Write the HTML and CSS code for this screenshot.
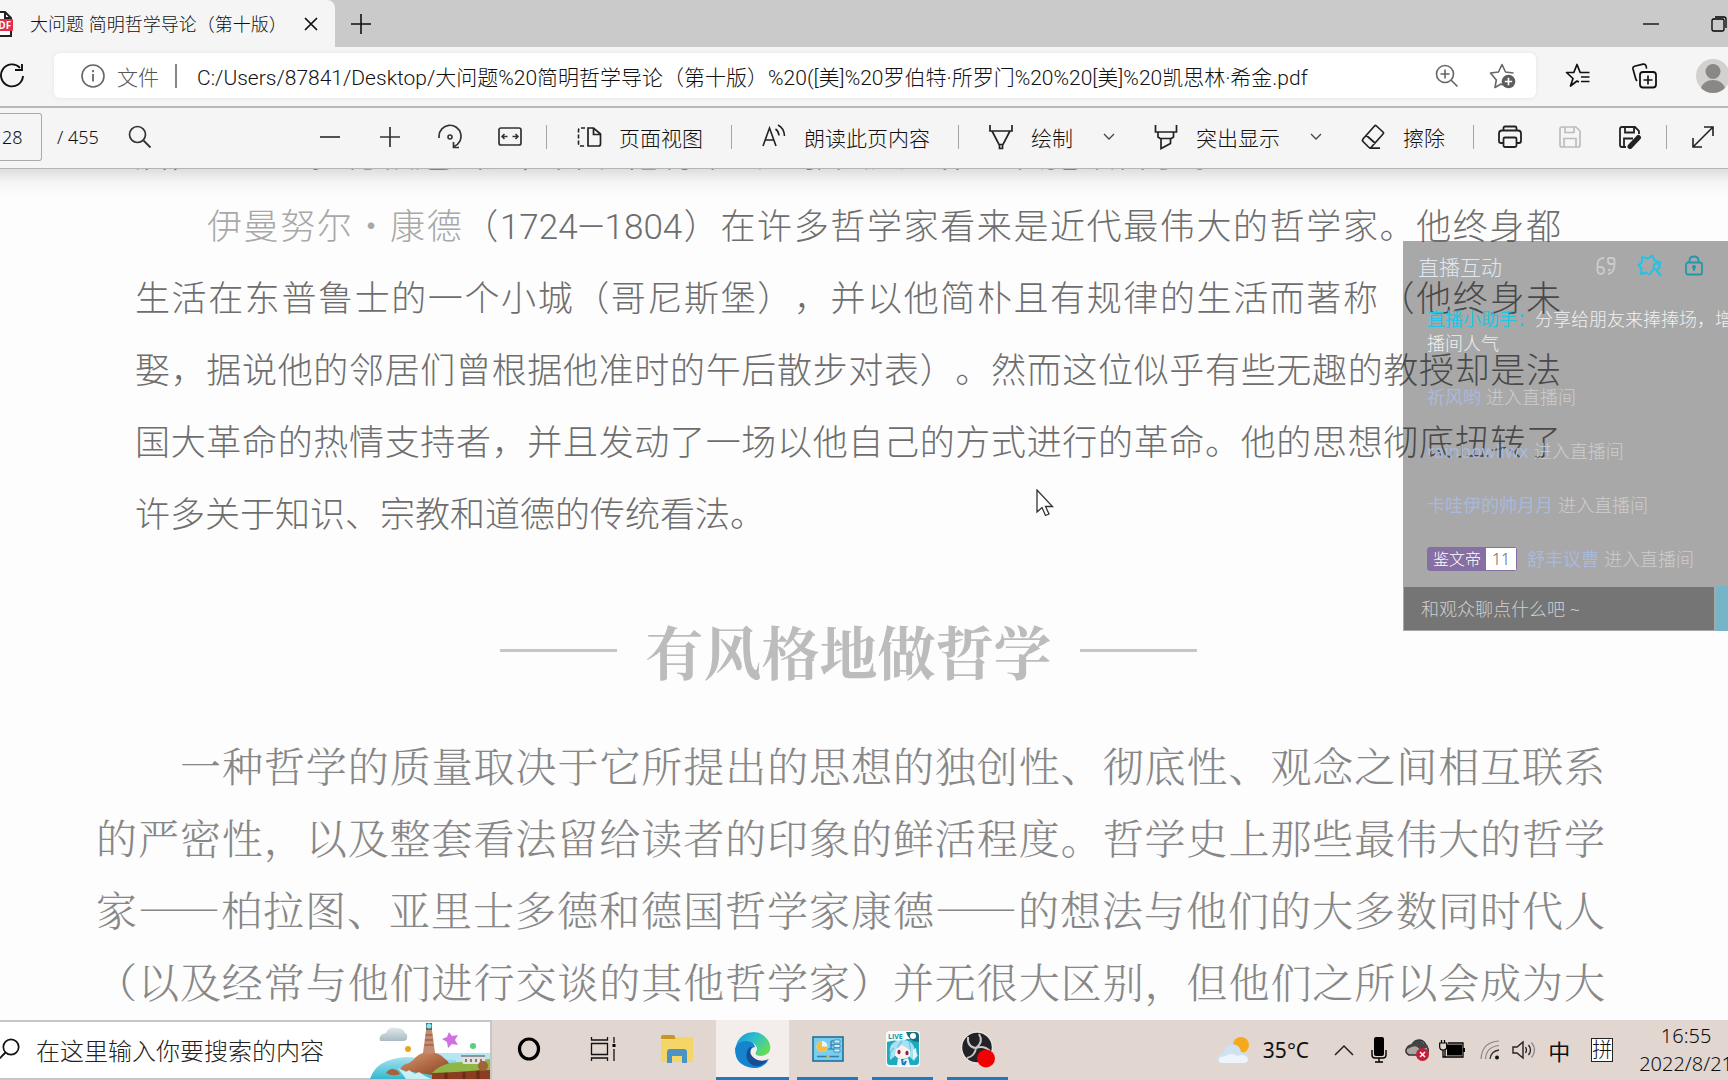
FILE: index.html
```html
<!DOCTYPE html>
<html lang="zh-CN">
<head>
<meta charset="utf-8">
<title>大问题 简明哲学导论（第十版）</title>
<link rel="stylesheet" href="styles.css">
</head>
<body>
<header class="tabstrip">
  <div class="tab">
    <svg class="tab-icon" width="24" height="26" viewBox="0 0 24 26"><path d="M3 1h13l6 6v18H3z" fill="#fff" stroke="#222" stroke-width="2"/><path d="M16 1v6h6" fill="none" stroke="#222" stroke-width="2"/><rect x="0" y="8" width="24" height="12" rx="1" fill="#e0304a"/><text x="3" y="18" font-size="10" font-weight="700" fill="#fff" class="svg-label">PDF</text></svg>
    <span class="tab-title">大问题 简明哲学导论（第十版）</span>
    <button class="tab-close" aria-label="关闭标签页"><svg width="14" height="14" viewBox="0 0 14 14"><path d="M1 1l12 12M13 1L1 13" stroke="#111" stroke-width="1.7"/></svg></button>
  </div>
  <button class="tab-new" aria-label="新建标签页"><svg width="22" height="22" viewBox="0 0 22 22"><path d="M11 1v20M1 11h20" stroke="#111" stroke-width="1.6"/></svg></button>
  <div class="window-buttons">
    <button aria-label="最小化"><svg width="16" height="16" viewBox="0 0 16 16"><path d="M0 8h16" stroke="#000" stroke-width="1.3"/></svg></button>
    <button aria-label="还原"><svg width="16" height="16" viewBox="0 0 16 16"><rect x="1" y="3" width="12" height="12" rx="1.5" fill="none" stroke="#000" stroke-width="1.3"/><path d="M4 1h9q2 0 2 2v9" fill="none" stroke="#000" stroke-width="1.3"/></svg></button>
  </div>
</header>

<nav class="navbar">
  <button class="reload" aria-label="刷新"><svg width="26" height="28" viewBox="0 0 26 28"><path d="M23 14a11 11 0 1 1-3-8.200M22 2v6h-7" fill="none" stroke="#111" stroke-width="1.9"/></svg></button>
  <div class="omnibox">
    <svg width="24" height="24" viewBox="0 0 24 24"><circle cx="12" cy="12" r="11" fill="none" stroke="#666" stroke-width="1.6"/><path d="M12 10v7.500M12 6v2.200" stroke="#666" stroke-width="1.8"/></svg>
    <label class="scheme" for="url">文件</label>
    <span class="scheme-rule"></span>
    <input id="url" class="url" type="text" value="C:/Users/87841/Desktop/大问题%20简明哲学导论（第十版）%20([美]%20罗伯特·所罗门%20%20[美]%20凯思林·希金.pdf">
    <button aria-label="缩放"><svg width="24" height="24" viewBox="0 0 24 24"><circle cx="10" cy="10" r="8.500" fill="none" stroke="#666" stroke-width="1.6"/><path d="M16 16l6.500 6.500M10 5.500v9M5.500 10h9" stroke="#666" stroke-width="1.6"/></svg></button>
    <button aria-label="收藏"><svg width="28" height="26" viewBox="0 0 28 26"><path d="M14 22l-2-1-6 3.500 1.300-7.500L1.500 10l8-1L13 1.500 16.500 9l8 1" fill="none" stroke="#666" stroke-width="1.600" stroke-linejoin="round"/><circle cx="19.500" cy="18.500" r="6.800" fill="#5c5c5c"/><path d="M19.500 14.800v7.400M15.800 18.500h7.400" stroke="#fff" stroke-width="1.600"/></svg></button>
  </div>
  <button class="nav-button" aria-label="收藏夹"><svg width="26" height="26" viewBox="0 0 26 26"><path d="M14 19l-2-1-6.500 5L8 15.500 1.500 9.500h7.300L12 1.500l3.200 8h9.300M16 14h8.500M16 18.500h8.500" fill="none" stroke="#111" stroke-width="1.700" stroke-linejoin="round"/></svg></button>
  <button class="nav-button" aria-label="集锦"><svg width="26" height="26" viewBox="0 0 26 26"><rect x="9" y="9" width="16" height="15.500" rx="3" fill="none" stroke="#111" stroke-width="1.800"/><path d="M17 12.500v9M12.500 17h9M6 18q-1-1-1.500-3L2 6q-.5-2 1.500-2.800L12 1.200q2-.5 3 1.500l.6 3" fill="none" stroke="#111" stroke-width="1.700"/></svg></button>
  <button class="avatar" aria-label="用户"><svg width="34" height="34" viewBox="0 0 34 34"><circle cx="17" cy="17" r="17" fill="#d3d1cf"/><circle cx="17" cy="12.500" r="7.500" fill="#8a8886"/><path d="M5 29q3-8 12-8t12 8q-5 5-12 5T5 29z" fill="#8a8886"/></svg></button>
</nav>

<div class="pdfbar">
  <input class="page-input" type="text" value="28" aria-label="页码">
  <span class="page-total">/ 455</span>
  <button class="find" aria-label="查找"><svg width="24" height="24" viewBox="0 0 24 24"><circle cx="9.500" cy="9.500" r="8" fill="none" stroke="#333" stroke-width="1.700"/><path d="M15.500 15.500l7 7" stroke="#333" stroke-width="1.800"/></svg></button>
  <div class="tools">
    <button class="tool-icon" aria-label="缩小"><svg width="22" height="24" viewBox="0 0 22 24"><path d="M1 12h20" stroke="#333" stroke-width="1.700"/></svg></button>
    <button class="tool-icon" aria-label="放大"><svg width="22" height="24" viewBox="0 0 22 24"><path d="M1 12h20M11 2v20" stroke="#333" stroke-width="1.700"/></svg></button>
    <button class="tool-icon" aria-label="旋转"><svg width="26" height="26" viewBox="0 0 26 26"><path d="M2 14V12a11 11 0 1 1 15 10.500M16.500 18v5.500h5.500" fill="none" stroke="#333" stroke-width="1.700"/><circle cx="13" cy="13" r="2" fill="none" stroke="#333" stroke-width="1.600"/></svg></button>
    <button class="tool-icon" aria-label="适应宽度"><svg width="24" height="20" viewBox="0 0 24 20"><rect x="1" y="1" width="22" height="17" rx="2" fill="none" stroke="#333" stroke-width="1.700"/><path d="M4 9.500h5.500M14.500 9.500H20M6.500 7L4 9.500 6.500 12M17.500 7L20 9.500 17.500 12" fill="none" stroke="#333" stroke-width="1.500"/></svg></button>
    <span class="rule"></span>
    <button class="tool-text"><svg width="26" height="22" viewBox="0 0 26 22"><path d="M12 2v18h10.500q2 0 2-2V8l-7-6zM17.500 2v6.500h7" fill="none" stroke="#222" stroke-width="1.700"/><path d="M9 2H5q-2.500 0-2.500 2.500v13Q2.500 20 5 20h4" fill="none" stroke="#222" stroke-width="1.600" stroke-dasharray="4 2"/></svg>页面视图</button>
    <span class="rule"></span>
    <button class="tool-text"><svg width="26" height="26" viewBox="0 0 26 26"><path d="M2 22L8.500 4 15 22M4.500 16h8M14.500 5q3 2 3.500 6.500M17 1q6 3 6.500 11" fill="none" stroke="#222" stroke-width="1.600"/></svg>朗读此页内容</button>
    <span class="rule"></span>
    <button class="tool-text"><svg width="26" height="26" viewBox="0 0 26 26"><path d="M2 1v6h22V1M4 7l7 13.500h4L22 7M11.500 20.500v4h3v-4" fill="none" stroke="#222" stroke-width="1.700"/></svg>绘制</button>
    <button class="chevron" aria-label="绘制选项"><svg width="12" height="8" viewBox="0 0 12 8"><path d="M1 1l5 5 5-5" fill="none" stroke="#444" stroke-width="1.300"/></svg></button>
    <button class="tool-text"><svg width="26" height="26" viewBox="0 0 26 26"><path d="M2.500 1v7h21V1M5 8v5l3 2v9.500l9.500-5V15l3-2V8M8 14.500h10" fill="none" stroke="#222" stroke-width="1.700"/></svg>突出显示</button>
    <button class="chevron" aria-label="突出显示选项"><svg width="12" height="8" viewBox="0 0 12 8"><path d="M1 1l5 5 5-5" fill="none" stroke="#444" stroke-width="1.300"/></svg></button>
    <button class="tool-text"><svg width="26" height="26" viewBox="0 0 26 26"><path d="M14.500 2q1-1 2 0l6.500 6q1 1 0 2L11.500 23q-1.500 1.500-3 0L3 17.500q-1-1 0-2.500zM6.500 11.500l9 8M9 24.200h11" fill="none" stroke="#222" stroke-width="1.700"/></svg>擦除</button>
    <span class="rule"></span>
    <button class="tool-icon" aria-label="打印"><svg width="24" height="24" viewBox="0 0 24 24"><path d="M5.500 5V3q0-1.500 1.500-1.500h10q1.500 0 1.500 1.500v2M5.500 18H3q-2 0-2-2V8.500q0-3 3-3h16q3 0 3 3V16q0 2-2 2h-2.500" fill="none" stroke="#222" stroke-width="1.800"/><rect x="5.500" y="12.500" width="13" height="9.500" rx="1.500" fill="none" stroke="#222" stroke-width="1.800"/></svg></button>
    <button class="tool-icon" aria-label="保存"><svg width="24" height="24" viewBox="0 0 24 24"><path d="M4 2h14l4 4v14q0 2-2 2H4q-2 0-2-2V4q0-2 2-2zM7 2v5.500h9V2M6 22v-8.500h12V22" fill="none" stroke="#bdbdbd" stroke-width="1.700"/></svg></button>
    <button class="tool-icon" aria-label="另存为"><svg width="24" height="24" viewBox="0 0 24 24"><path d="M8 22H4q-2 0-2-2V4q0-2 2-2h13l4 4v3M7 2v5.500h9V2M6 22v-8.500h9" fill="none" stroke="#222" stroke-width="1.800"/><path d="M12 21.500l8.500-9" stroke="#222" stroke-width="5" stroke-linecap="round"/></svg></button>
    <span class="rule"></span>
    <button class="tool-icon" aria-label="全屏"><svg width="22" height="24" viewBox="0 0 22 24"><path d="M1 22L21 2M12 2h9v9M1 13v9h9" fill="none" stroke="#222" stroke-width="1.600"/></svg></button>
  </div>
</div>

<main class="viewer">
  <article class="excerpt">
    <p><span class="short">后，亚里士多德被迫出逃，并说他将不会让雅典人“第二次犯毁哲学家”。</span></p>
    <p>
      <span class="line indent"><em>伊曼努尔·康德</em>（<span class="years">1724—1804</span>）在许多哲学家看来是近代最伟大的哲学家。他终身都</span>
      <span class="line">生活在东普鲁士的一个小城（哥尼斯堡），并以他简朴且有规律的生活而著称（他终身未</span>
      <span class="line">娶，据说他的邻居们曾根据他准时的午后散步对表）。然而这位似乎有些无趣的教授却是法</span>
      <span class="line">国大革命的热情支持者，并且发动了一场以他自己的方式进行的革命。他的思想彻底扭转了</span>
      <span class="short">许多关于知识、宗教和道德的传统看法。</span>
    </p>
  </article>
  <h2 class="chapter">有风格地做哲学</h2>
  <article class="body-text">
    <p>
      <span class="line indent">一种哲学的质量取决于它所提出的思想的独创性、彻底性、观念之间相互联系</span>
      <span class="line">的严密性，以及整套看法留给读者的印象的鲜活程度。哲学史上那些最伟大的哲学</span>
      <span class="line">家——柏拉图、亚里士多德和德国哲学家康德——的想法与他们的大多数同时代人</span>
      <span class="line">（以及经常与他们进行交谈的其他哲学家）并无很大区别，但他们之所以会成为大</span>
    </p>
  </article>
</main>

<footer class="taskbar">
  <div class="search">
    <svg class="search-icon" width="24" height="24" viewBox="0 0 24 24"><circle cx="15" cy="9" r="7.700" fill="none" stroke="#111" stroke-width="1.700"/><path d="M9.500 14.500L2 22" stroke="#111" stroke-width="1.900"/></svg>
    <input type="text" aria-label="搜索" placeholder="在这里输入你要搜索的内容">
    <svg class="island" width="120" height="57" viewBox="0 0 120 57">
      <defs><linearGradient id="sea" x1="0" y1="0" x2="0" y2="1"><stop offset="0" stop-color="#a5e2f0"/><stop offset="1" stop-color="#35b9cf"/></linearGradient><linearGradient id="rock" x1="0" y1="0" x2="1" y2="1"><stop offset="0" stop-color="#d99a70"/><stop offset="1" stop-color="#8a3f1e"/></linearGradient><linearGradient id="cloud" x1="0" y1="0" x2="0" y2="1"><stop offset="0" stop-color="#dfe8ec"/><stop offset="1" stop-color="#a9bac2"/></linearGradient></defs>
      <path d="M10 19q-2-7 6-8 3-7 11-5 6 0 8 5 3 1 2 5 0 3-4 3z" fill="url(#cloud)"/>
      <path d="M64 31h56v26H64z" fill="#b5e6f4"/>
      <path d="M0 57q6-20 36-22l50 3v19z" fill="url(#sea)"/>
      <path d="M30 48q2-5 6-6 5-1 10-7 4-4 11-5 12 0 17 6 7 5 8 14l-20 3z" fill="url(#rock)"/>
      <path d="M53 31L56 8h6l3 23q-6 2-12 0z" fill="#c48a72"/><path d="M55.500 13h7M55 18h8M54.500 23h9" stroke="#8d4c3b" stroke-width="1"/><path d="M56 1h6v7h-6z" fill="#456f78"/><circle cx="59" cy="4" r="2.500" fill="#8de5ee"/>
      <path d="M62 52q10-8 30-8h28v13H62z" fill="#8a3d20"/><path d="M76 50v7M94 48v9M108 48v9" stroke="#6b2b15" stroke-width="3"/><path d="M62 51q10-11 30-11l28-3v11q-10 0-20 1t-38 2z" fill="#8fb746"/>
      <path d="M91 34h24v8H93z" fill="#e4dfdd"/><path d="M91 34h24" stroke="#8f9499" stroke-width="2"/><path d="M96 37v3M101 37v3M106 37v3M111 37v3" stroke="#555" stroke-width="1.400"/>
      <path d="M16 51q5-7 12-2l2 3q-7 3-14-1z" fill="#a8603c"/><circle cx="113" cy="44" r="5" fill="#a06238"/><path d="M28 46l8 4 3-2 6 4 4-2 6 4 7 3H36z" fill="#eafbfd" opacity=".8"/>
      <circle cx="38" cy="27" r="3" fill="#e5a81c"/><circle cx="103" cy="24" r="3" fill="#59cf7d"/><path d="M79 10l3 4 6-1-3 5 3 5-6-1-4 4-1-6-5-3 5-2z" fill="#cf72e0"/>
    </svg>
  </div>
  <button class="task" aria-label="Cortana"><svg width="24" height="26" viewBox="0 0 24 26"><ellipse cx="12" cy="13" rx="9.500" ry="10" fill="none" stroke="#000" stroke-width="3.200"/></svg></button>
  <button class="task" aria-label="任务视图"><svg width="26" height="26" viewBox="0 0 26 26"><path d="M1.500 1v3h16V1M1.500 25v-3h16v3M1.500 7.500h16v11h-16zM24 1v6M24 13v12" fill="none" stroke="#111" stroke-width="1.300"/><rect x="22.500" y="8" width="3" height="3" fill="#000"/></svg></button>
  <button class="task" aria-label="文件资源管理器"><svg width="34" height="28" viewBox="0 0 34 28"><path d="M1 2q0-2 2-2h11l2 4H1z" fill="#c9971f"/><path d="M1 5l14-1 2-2h15q1 0 1 1v23q0 1-1 1H2q-1 0-1-1z" fill="#f5d566"/><path d="M7 28V17q0-3 3-3h14q3 0 3 3v11h-5v-7H12v7z" fill="#4a94c4"/></svg></button>
  <button class="task running current" aria-label="Microsoft Edge"><svg width="38" height="38" viewBox="0 0 38 38"><defs><linearGradient id="eg" x1="0" y1="0" x2="1" y2=".6"><stop offset="0" stop-color="#1b8fd6"/><stop offset=".5" stop-color="#2bc0cf"/><stop offset="1" stop-color="#63dc58"/></linearGradient></defs><path d="M2 16A17.500 17.500 0 0 1 36 15q2 10-9 11-7 0-5-4 2-3 0-6-5-8-20 0z" fill="url(#eg)"/><path d="M1 19q2-8 11-8 8 0 9 6-6 1-5 8 2 10 18 6-6 8-15 7Q1 36 1 19z" fill="#1683cf"/><path d="M16 17q-5 5-3 12 3 8 12 7 6-2 10-7-9 4-15-1-6-5-2-11z" fill="#174f96"/></svg></button>
  <button class="task running" aria-label="控制面板"><svg width="32" height="26" viewBox="0 0 32 26"><rect x="1" y="1" width="30" height="24" fill="#79cdf0" stroke="#23709b" stroke-width="1.600"/><circle cx="10" cy="10.500" r="5.500" fill="#e8f7fd"/><path d="M10 10.500V5a5.500 5.500 0 1 0 5.500 5.500z" fill="#f1bd43"/><path d="M16 13h3V5h3M19 9h3M19 13h3" fill="none" stroke="#22769f" stroke-width="1"/><path d="M22 4h6v3h-6zM22 8.500h6v3h-6zM22 13h6v3h-6z" fill="#d4f1fc" stroke="#2d80ab" stroke-width=".8"/><path d="M5 20.500h22" stroke="#2d80ab" stroke-width="1.500"/><circle cx="16" cy="20.500" r="1.500" fill="#efb33b"/></svg></button>
  <button class="task running" aria-label="直播"><svg width="36" height="38" viewBox="0 0 36 38"><rect x="1" y="1" width="34" height="36" rx="4" fill="#f6fbfc"/><path d="M2 12q8-3 14 0l6-3h12v23q0 3-3 3H5q-3 0-3-3z" fill="#1fa9bf"/><path d="M21 2h9q4 0 4 4v6q-10 0-13-10z" fill="#176f80"/><circle cx="28" cy="6" r="3" fill="#fff"/><text x="3" y="9" font-size="7" font-weight="700" fill="#1793ab" class="svg-label">LIVE</text><path d="M5 23q-2-11 11-13 13-1 14 12l3 3-4 6-5-5H10l-5 4z" fill="#a6e2f1"/><path d="M9 18q-4 2-4 9M17 11q-3 3-5 8M24 12q2 6 1 9" fill="none" stroke="#6cc3da" stroke-width="1.200"/><path d="M11 19l6-4 8 5v6q-3 3-8 3t-7-4z" fill="#fff1ee"/><ellipse cx="14" cy="22" rx="1.600" ry="2.200" fill="#8b2146"/><ellipse cx="22" cy="23" rx="1.600" ry="2.200" fill="#8b2146"/><path d="M13 28l5 2 5-2 2 7H12z" fill="#e8f6fb"/><path d="M17 29l1 6M21 31l-2 4" stroke="#2575b2" stroke-width="2"/><path d="M28 20l3-2 1 8-4 3z" fill="#e8f6fb"/></svg></button>
  <button class="task running" aria-label="OBS"><svg width="36" height="38" viewBox="0 0 36 38"><circle cx="17" cy="17.500" r="15.500" fill="#232226" stroke="#e8e4e2" stroke-width="1.500"/><path d="M16 18Q7 17 8 7M16 18q8-3 14 3M16 18q-1 8-9 10M16 18q8-6 3-14" fill="none" stroke="#c9c6c6" stroke-width="2"/><circle cx="26" cy="28.500" r="9" fill="#f00000"/></svg></button>
  <div class="tray">
    <svg width="34" height="28" viewBox="0 0 34 28"><circle cx="25" cy="9" r="8" fill="#f6a91c"/><path d="M3 26q-4-6 4-9 2-9 10-9 7 1 8 8 8 1 7 7 0 4-4 4z" fill="#cfe2f2"/><path d="M3 26q-2-5 6-6 7-4 12 0 8-3 11 3 0 4-4 4H5z" fill="#eef5fa"/></svg>
    <span class="temp">35°C</span>
    <svg class="up" width="20" height="12" viewBox="0 0 20 12"><path d="M1 11l9-9 9 9" fill="none" stroke="#222" stroke-width="1.500"/></svg>
    <svg class="mic" width="16" height="26" viewBox="0 0 16 26"><rect x="3" y="0" width="10" height="19" rx="2" fill="#000"/><path d="M1 13v5q0 3 3 3h8q3 0 3-3v-5M8 21v4M4 25h8" fill="none" stroke="#000" stroke-width="1.400"/></svg>
    <svg class="drive" width="26" height="24" viewBox="0 0 26 24"><path d="M5 17q-5-3-2-7 2-3 5-3 2-5 8-5 5 1 6 6 4 3 1 9z" fill="#a9a6a4" stroke="#333" stroke-width="1.500"/><path d="M4 11q8-6 12 1l8-3q0-3-4-3-3-5-9-3-5 3-7 8z" fill="#444"/><circle cx="18.500" cy="16.500" r="6.500" fill="#c41f3a"/><path d="M16 14l5 5M21 14l-5 5" stroke="#fff" stroke-width="1.500"/></svg>
    <svg class="battery" width="26" height="20" viewBox="0 0 26 20"><rect x="8" y="4.500" width="15" height="11" fill="#000"/><path d="M9 3h15v14H6V9M25.300 8v4M4 9v8h3M2.500 0v3M5.500 0v3" stroke="#000" stroke-width="1.300" fill="none"/><path d="M.7 3h7v4q0 3-3.500 3T.7 7z" fill="#e0d5cf" stroke="#000" stroke-width="1.200"/></svg>
    <svg class="wifi" width="20" height="20" viewBox="0 0 20 20"><circle cx="17" cy="17.500" r="2" fill="#111"/><path d="M10 19q1-8 9-9" fill="none" stroke="#333" stroke-width="1.300"/><path d="M1 19Q2 2 19 1M5.500 19Q6 7 19 5.500" fill="none" stroke="#8d8784" stroke-width="1.200"/></svg>
    <svg class="speaker" width="24" height="20" viewBox="0 0 24 20"><path d="M1 7v6h4l6 5V2L5 7z" fill="none" stroke="#222" stroke-width="1.400"/><path d="M13.500 7q2 3 0 6M16.500 5q4 5 0 10" fill="none" stroke="#222" stroke-width="1.300"/><path d="M19.500 2.500q6 7.500 0 15" fill="none" stroke="#8d8784" stroke-width="1.300"/></svg>
    <span class="ime">中</span>
    <span class="pinyin">拼</span>
    <div class="clock"><span>16:55</span><span>2022/8/21</span></div>
  </div>
</footer>

<aside class="live">
  <div class="live-inner">
    <div class="live-head">
      <h3>直播互动</h3>
      <button aria-label="连麦"><svg width="20" height="20" viewBox="0 0 20 20"><path d="M8 2Q2 2 1.500 8v6q0 4 3.500 4 3 0 3-3.500T4.500 11H1.500M12 2h4q2.500 0 2.500 2.500V9q-.5 8-6.500 9M18.500 8h-4Q12 8 12 5V2M12 14h2.500" fill="none" stroke="#cbcbcb" stroke-width="1.800"/></svg></button>
      <button aria-label="特效"><svg width="26" height="24" viewBox="0 0 26 24"><path d="M13 21l-4-2.500L4 20l.5-5.500L1.500 11 5 8.500 5 3l6 1.500L15.500 1.500l2 5 6 2-1 3" fill="none" stroke="#20c4e6" stroke-width="2" stroke-linejoin="round"/><circle cx="19.500" cy="12.500" r="3" fill="none" stroke="#20c4e6" stroke-width="2"/><path d="M18 15q-4 1-4 5M19 16l5 6" fill="none" stroke="#20c4e6" stroke-width="2.200"/></svg></button>
      <button aria-label="锁定"><svg width="20" height="22" viewBox="0 0 20 22"><rect x="2" y="7.500" width="16" height="12" rx="2" fill="none" stroke="#2397aa" stroke-width="1.800"/><path d="M5.500 7V5Q6 1.500 10 1.500T14.500 5v2M10 11v5" fill="none" stroke="#2397aa" stroke-width="1.800"/><circle cx="10" cy="12" r="2" fill="#2397aa"/></svg></button>
    </div>
    <ul class="messages">
      <li class="notice"><b>直播小助手：</b>分享给朋友来捧捧场，增加直播间人气</li>
      <li><i>祈风哟</i> 进入直播间</li>
      <li><i>rainbowliwx</i> 进入直播间</li>
      <li><i>卡哇伊的帅月月</i> 进入直播间</li>
      <li><span class="badge"><span class="badge-name">鉴文帝</span><span class="badge-level">11</span></span><i>舒丰议曹</i> 进入直播间</li>
    </ul>
    <div class="composer">
      <input type="text" aria-label="聊天" placeholder="和观众聊点什么吧 ~">
      <button aria-label="发送"></button>
    </div>
  </div>
</aside>
<svg class="pointer" width="18" height="28" viewBox="0 0 18 28"><path d="M1 1v22l5-4.500 3.500 8 3.500-1.500-3.500-7.500h7z" fill="#fff" stroke="#333" stroke-width="1.300"/></svg>
</body>
</html>
```
FILE: styles.css
```css
* { box-sizing: border-box; }

body {
  margin: 0;
  height: 100vh;
  overflow: hidden;
  position: relative;
  display: flex;
  flex-direction: column;
  background: #fdfdfd;
  color: #111;
  font-family: "Noto Sans", "Noto Sans CJK SC", sans-serif;
  font-weight: 300;
}

button {
  display: flex;
  align-items: center;
  justify-content: center;
  padding: 0;
  border: 0;
  background: none;
  color: inherit;
  font: inherit;
}

input {
  min-width: 0;
  border: 0;
  padding: 0;
  background: none;
  color: inherit;
  font: inherit;
  outline: 0;
}

p, h2, h3, ul { margin: 0; padding: 0; }
svg { flex: none; display: block; }
.svg-label { font-family: "Open Sans", sans-serif; }

/* Tabs */
.tabstrip {
  display: flex;
  flex: none;
  height: 47px;
  background: #cacaca;
}

.tab {
  display: flex;
  align-items: center;
  width: 335px;
  border-radius: 0 8px 0 0;
  background: #f5f5f5;
  font-size: 18px;
}

.tab-icon { margin-left: -11px; }
.tab-title { flex: 1; margin-left: 17px; padding-bottom: 2px; white-space: nowrap; }
.tab-close { width: 52px; height: 40px; }
.tab-new { width: 52px; }
.window-buttons { display: flex; margin-left: auto; }
.window-buttons button { width: 68px; }
.window-buttons button + button { margin-right: -25px; }

/* Address bar */
.navbar {
  display: flex;
  align-items: center;
  flex: none;
  height: 61px;
  padding-bottom: 2px;
  border-bottom: 2px solid #b9b9b9;
  background: #f5f5f5;
}

.reload { width: 54px; justify-content: flex-start; }

.omnibox {
  display: flex;
  align-items: center;
  flex: 1;
  height: 45px;
  margin-right: 9px;
  padding: 0 19px 0 27px;
  border-radius: 6px;
  background: #fff;
  box-shadow: 0 0 4px #e4e4e4;
  font-size: 21px;
}

.omnibox button { width: 28px; margin-left: 28px; }
.scheme { margin-left: 12px; color: #555; }
.scheme-rule { width: 2px; height: 24px; margin: 0 20px 0 16px; background: #888; }
.url { flex: 1; height: 40px; font-family: Roboto, "Noto Sans CJK SC", sans-serif; }
.nav-button { width: 66px; }
.avatar { width: 34px; margin: 0 -2px 0 19px; }

/* Document toolbar */
.pdfbar {
  display: flex;
  align-items: center;
  flex: none;
  height: 61px;
  padding-bottom: 2px;
  border-bottom: 1px solid #b5b5b5;
  background: #f5f5f5;
}

.page-input {
  width: 42px;
  height: 48px;
  padding-left: 2px;
  border: 1px solid #aaa;
  border-left: 0;
  border-radius: 0 3px 3px 0;
  font-size: 18px;
}

.page-total { margin-left: 15px; font-size: 18px; }
.find { width: 40px; margin-left: 21px; }
.tools { display: flex; align-items: center; margin-left: auto; margin-right: -5px; }
.tool-icon { width: 60px; height: 48px; }
.tool-text { gap: 17px; height: 48px; padding: 0 22px 0 23px; font-size: 21px; white-space: nowrap; }
.tool-text:has(+ .chevron) { padding-right: 24px; }
.chevron { width: 24px; height: 48px; margin-right: 9px; }
.rule { width: 1px; height: 24px; margin: 0 6px; background: #a5a5a5; }

/* Document */
.viewer {
  flex: 1;
  min-height: 0;
  overflow: hidden;
  background: linear-gradient(#dedede, #f6f6f6 14px, #fdfdfd 30px);
}

.line, .short { display: block; white-space: nowrap; text-spacing-trim: space-all; }
.line { text-align: justify; text-align-last: justify; }

.excerpt {
  margin-top: -53px;
  padding: 0 167px 0 135px;
  color: #6e6e6e;
  font-family: "Noto Sans CJK SC", sans-serif;
  font-size: 35px;
  line-height: 72px;
}

.excerpt em { color: #a8a8a8; font-style: normal; }
.excerpt .indent { padding-left: 72px; }
.years { font-family: Roboto, sans-serif; line-height: 1; }

.chapter {
  display: flex;
  align-items: center;
  justify-content: center;
  gap: 28px;
  height: 86px;
  margin: 59px 31px 36px 0;
  color: #bcbcbc;
  font-family: "Noto Serif CJK SC", "Noto Sans CJK SC", serif;
  font-size: 58px;
  font-weight: 700;
  line-height: 86px;
}

.chapter::before, .chapter::after {
  content: "";
  width: 117px;
  height: 3px;
  background: #c6c6c6;
}

.body-text {
  padding: 0 123px 0 96px;
  color: #878787;
  font-family: "Noto Serif CJK SC", "Noto Sans CJK SC", serif;
  font-size: 41px;
  line-height: 72px;
}

.body-text .indent { padding-left: 84px; }

/* Taskbar */
.taskbar {
  display: flex;
  flex: none;
  height: 60px;
  background: #e1d6d0;
}

.search {
  display: flex;
  align-items: center;
  width: 492px;
  border: 2px solid #c6c6c6;
  border-left: 0;
  background: #fff;
}

.search-icon { margin-left: -4px; }
.search input { flex: 1; height: 48px; margin-left: 16px; font-size: 24px; }
.search input::placeholder { color: #222; opacity: 1; }

.task { width: 74px; border-bottom: 3px solid transparent; }
.running { width: 61px; margin: 0 7px; border-color: #1b7bbd; }
.current { width: 73px; margin: 0 1px 0 2px; background: #f3eeec; }

.tray { display: flex; align-items: center; margin-left: auto; }
.temp { margin-left: 13px; font-size: 21px; font-weight: 400; }
.up { margin-left: 25px; }
.mic { margin-left: 17px; }
.drive { margin-left: 17px; }
.battery { margin-left: 9px; }
.wifi { margin-left: 15px; }
.speaker { margin-left: 12px; }
.ime { margin-left: 12px; font-size: 22px; font-weight: 400; }
.pinyin { margin-left: 21px; border: 1px solid #222; background: #fff; font-size: 20px; line-height: 22px; }

.clock {
  display: flex;
  flex-direction: column;
  align-items: center;
  margin: 0 -5px 0 26px;
  font-size: 20px;
  line-height: 28px;
}

/* Live chat window, floating above the desktop */
.live {
  position: absolute;
  top: 241px;
  right: 0;
  width: 325px;
  height: 390px;
  overflow: hidden;
  background: rgba(0, 0, 0, .335);
  color: #e8e8e8;
  font-size: 18px;
}

.live-inner { width: 372px; }
.live-head { display: flex; align-items: center; height: 50px; padding-left: 15px; }
.live-head h3 { width: 166px; color: #dfe8f2; font-size: 21px; font-weight: 300; }
.live-head button { width: 44px; }
.messages { list-style: none; height: 295px; padding: 16px 4px 0 24px; line-height: 24px; }
.messages li { display: flex; align-items: center; gap: 5px; height: 24px; margin-bottom: 30px; color: #cdcdcd; white-space: nowrap; }
.messages .notice { display: block; height: 48px; color: #f0f0f0; white-space: normal; }
.messages b { color: #22c5e4; font-weight: 400; }
.messages i { color: #a9b9dc; font-style: normal; font-weight: 400; }

.badge {
  display: flex;
  height: 24px;
  margin-right: 5px;
  border: 1px solid #8670a3;
  border-radius: 3px;
  background: #8670a3;
  color: #fff;
  font-size: 16px;
  line-height: 22px;
}

.badge-name { padding: 0 5px; }
.badge-level { width: 30px; background: #fff; color: #666; text-align: center; }

.composer { display: flex; gap: 2px; height: 45px; }
.composer input { width: 310px; height: 43px; margin: 1px 0 0 1px; padding-left: 17px; background: #757575; }
.composer input::placeholder { color: #cfcfcf; opacity: 1; }
.composer button { flex: 1; background: #76b4c8; }

.pointer { position: absolute; left: 1036px; top: 489px; }
```
